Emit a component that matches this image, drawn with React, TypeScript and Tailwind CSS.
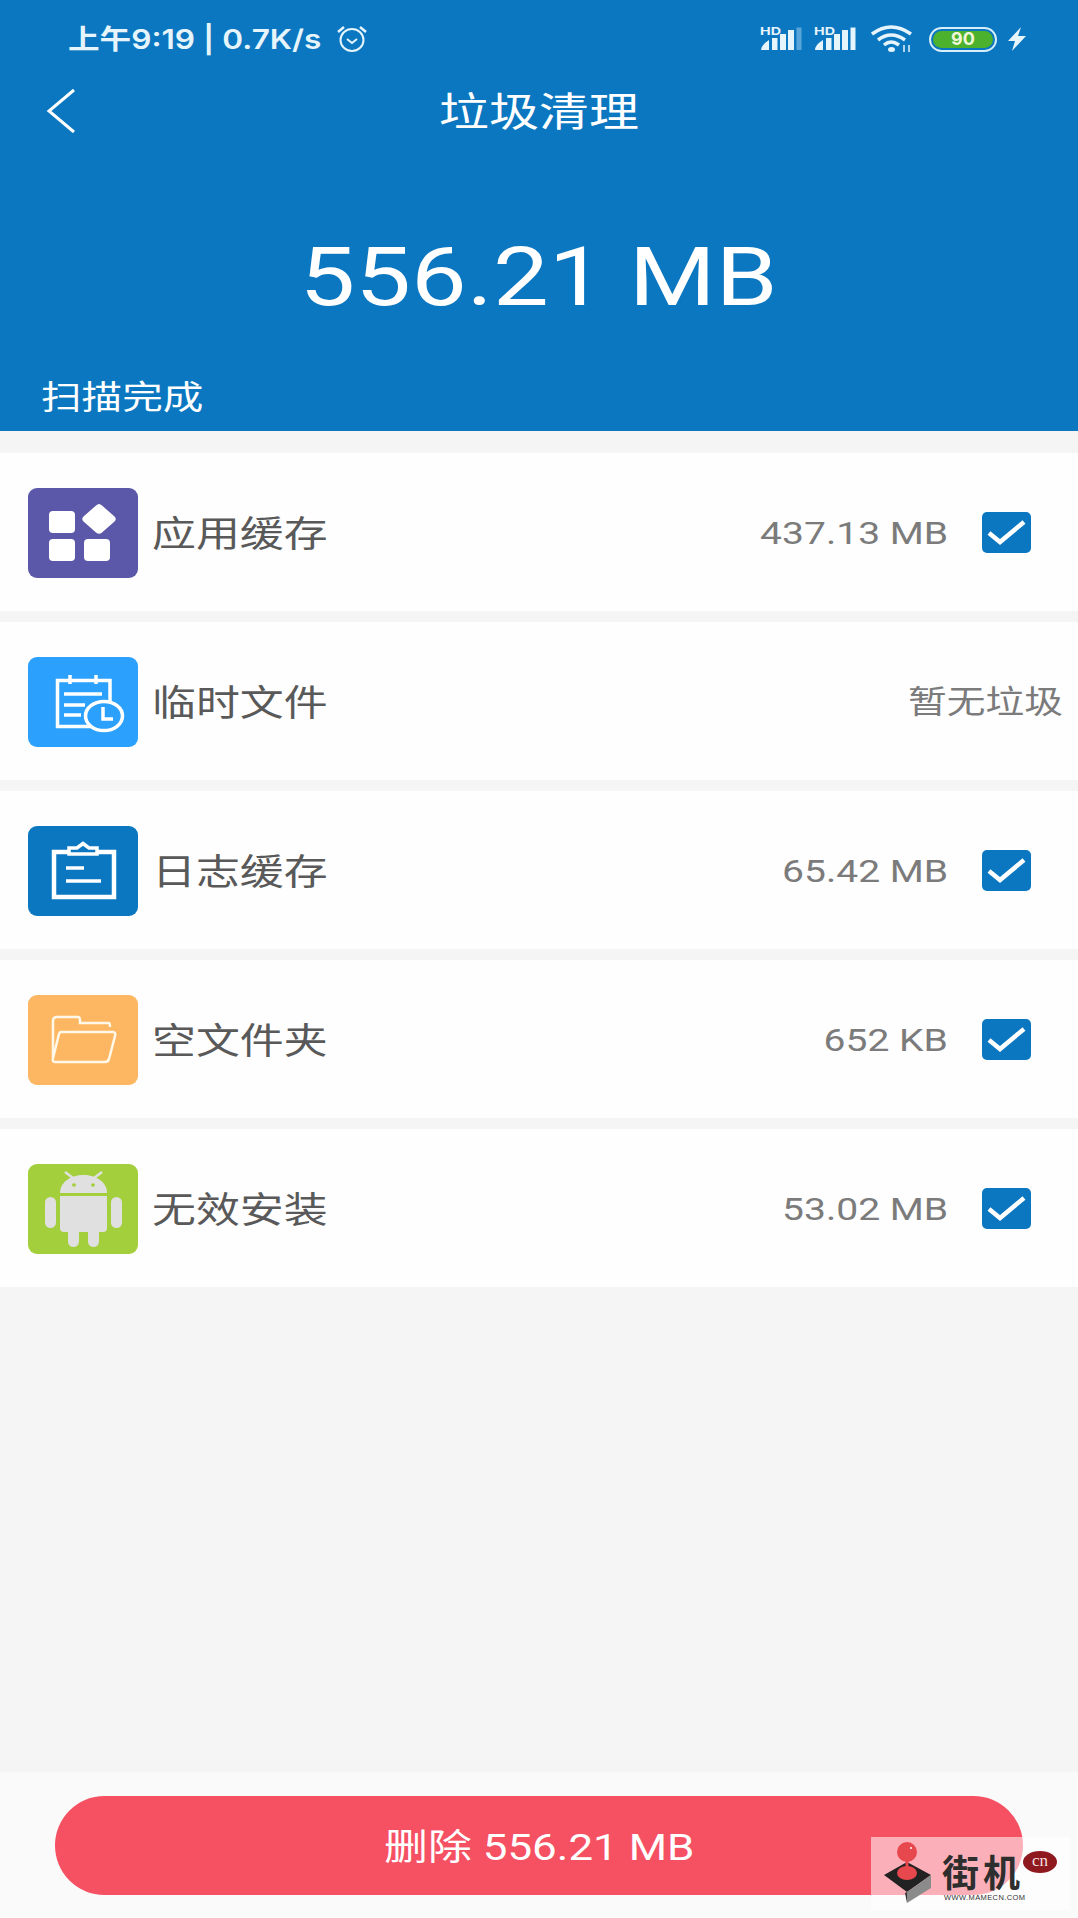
import React from "react";

const cjk = "font-['Roboto','Noto_Sans_CJK_SC',sans-serif]";

function Check() {
  return (
    <svg width="49" height="41" viewBox="0 0 49 41" className="-mt-[2px] shrink-0">
      <rect width="49" height="41" rx="5" fill="#0a77c0" />
      <path d="M7 21L18 30L42 10" fill="none" stroke="#fff" strokeWidth="4.5" />
    </svg>
  );
}

function IconBox({ bg, children }: { bg: string; children: React.ReactNode }) {
  return (
    <svg width="110" height="90" viewBox="0 0 110 90" className="shrink-0">
      <rect width="110" height="90" rx="9" fill={bg} />
      {children}
    </svg>
  );
}

const IconApps = () => (
  <IconBox bg="#5b57a9">
    <rect x="21" y="23" width="26" height="22" rx="4" fill="#fff" />
    <rect x="21" y="51" width="26" height="22" rx="4" fill="#fff" />
    <rect x="56" y="51" width="26" height="22" rx="4" fill="#fff" />
    <path d="M71 16Q72.500 16 74 17.500L86.500 28.500Q89 31 86.500 33.500L74 44.500Q71 47 68 44.500L55.500 33.500Q53 31 55.500 28.500L68 17.500Q69.500 16 71 16Z" fill="#fff" />
  </IconBox>
);

const IconCalendar = () => (
  <IconBox bg="#2ba0fd">
    <path d="M70 69.500H29.500V23.500H82V46" fill="none" stroke="#fff" strokeWidth="3.500" />
    <path d="M42 18V27M68 18V27" stroke="#fff" strokeWidth="3.500" />
    <path d="M36 37H74M36 48H57M36 58H53" stroke="#fff" strokeWidth="3.500" />
    <ellipse cx="76" cy="59" rx="18.500" ry="14.500" fill="#2ba0fd" stroke="#fff" strokeWidth="3.500" />
    <path d="M75 50V62H85" fill="none" stroke="#fff" strokeWidth="3.500" />
  </IconBox>
);

const IconClip = () => (
  <IconBox bg="#0a77c0">
    <path d="M40 26H26V71H86V26H70" fill="none" stroke="#fff" strokeWidth="4.500" />
    <path d="M41 28V22H49L55 17.500L61 22H69V28Z" fill="none" stroke="#fff" strokeWidth="3.500" />
    <path d="M38 42H56M38 55H73" stroke="#fff" strokeWidth="3.500" />
  </IconBox>
);

const IconFolder = () => (
  <IconBox bg="#fdb763">
    <path d="M25 62V26Q25 22 29 22H50Q52 22 52 25V28H81Q82 28 82 32" fill="none" stroke="#fff8e8" strokeWidth="2.500" />
    <path d="M33 37H85Q88 37 87 41L81 64Q80 67 77 67H27Q24 67 25 63L31 39Q31.500 37 33 37Z" fill="none" stroke="#fff8e8" strokeWidth="2.500" />
  </IconBox>
);

const IconAndroid = () => (
  <IconBox bg="#a4cf3d">
    <path d="M32 29C32 18 43 11 55.500 11C68 11 79 18 79 29Z" fill="#e0e0e0" />
    <path d="M45 14L37 8M66 14L74 8" stroke="#e0e0e0" strokeWidth="2.500" />
    <ellipse cx="46" cy="21" rx="2" ry="1.800" fill="#a4cf3d" />
    <ellipse cx="65" cy="21" rx="2" ry="1.800" fill="#a4cf3d" />
    <path d="M32 32H79V64Q79 68 75 68H36Q32 68 32 64Z" fill="#e0e0e0" />
    <rect x="17" y="33" width="11" height="31" rx="5.500" fill="#e0e0e0" />
    <rect x="83" y="33" width="11" height="31" rx="5.500" fill="#e0e0e0" />
    <rect x="40" y="60" width="11" height="23" rx="5.500" fill="#e0e0e0" />
    <rect x="60" y="60" width="11" height="23" rx="5.500" fill="#e0e0e0" />
  </IconBox>
);

function Row({ icon, label, value, checked = true }: { icon: React.ReactNode; label: string; value: string; checked?: boolean }) {
  return (
    <div className={`flex h-[158px] items-center bg-[#fefefe] pt-[2px] pl-[28px] ${checked ? "pr-[47px]" : "pr-[15px]"}`}>
      {icon}
      <span className="ml-[14px] inline-block origin-left scale-x-[1.22] pt-[3px] text-[36px] leading-[50px] text-[#595959]">{label}</span>
      <span className={`ml-auto inline-block origin-right ${checked ? "mr-[34px] scale-x-[1.22]" : "scale-x-[1.21]"} text-[32px] leading-[44px] text-[#7b7b7b]`}>{value}</span>
      {checked && <Check />}
    </div>
  );
}

function Signal({ faint }: { faint?: boolean }) {
  return (
    <svg width="42" height="32" viewBox="0 -4 42 32" className="-mt-[4px] shrink-0">
      <text x="0" y="9.500" fontSize="11" fontWeight="700" fill="#e6f4fb" fontFamily="Inter, sans-serif" textLength="21" lengthAdjust="spacingAndGlyphs">HD</text>
      <path d="M1 25Q1 20 9 15V25Z" fill="#e6f4fb" />
      <rect x="12" y="13" width="5.500" height="12" fill="#e6f4fb" />
      <rect x="20" y="9" width="6" height="16" fill="#e6f4fb" />
      <rect x="28" y="5" width="6" height="20" fill="#e6f4fb" />
      <rect x="36.500" y="2.500" width="5" height="22.500" fill={faint ? "#5aa6d8" : "#e6f4fb"} />
    </svg>
  );
}

function StatusRight() {
  return (
    <div className="flex items-center">
      <Signal faint />
      <span className="w-[12px]" />
      <Signal />
      <svg width="44" height="28" viewBox="0 0 44 28" className="ml-[15px] shrink-0">
        <path d="M1 9Q20 -5 40 9" fill="none" stroke="#e6f4fb" strokeWidth="3.500" />
        <path d="M7 15Q20 5 34 15" fill="none" stroke="#e6f4fb" strokeWidth="3.500" />
        <path d="M13 20Q20 14 28 20" fill="none" stroke="#e6f4fb" strokeWidth="3.500" />
        <ellipse cx="20.500" cy="24.500" rx="3.500" ry="2.500" fill="#e6f4fb" />
        <path d="M33 20V27M38 20V27" stroke="#e6f4fb" strokeWidth="1.500" />
      </svg>
      <div className="ml-[14px] flex h-[25px] w-[68px] items-center justify-center rounded-full border-[2px] border-[#d6eef8] p-[2px]">
        <div className="flex h-full w-full items-center justify-center rounded-full bg-[#4cb22e] font-['Inter',sans-serif] text-[18px] leading-none font-bold text-[#f0f6d8]">90</div>
      </div>
      <svg width="20" height="24" viewBox="0 0 20 24" className="ml-[10px] shrink-0">
        <path d="M14 0L1 14H8L5 24L19 9H11Z" fill="#e6f4fb" />
      </svg>
    </div>
  );
}

function Watermark() {
  return (
    <div className="absolute top-[1837px] left-[871px] h-[73px] w-[199px] bg-white/55">
      <svg width="70" height="73" viewBox="0 0 70 73" className="absolute top-0 left-0">
        <path d="M13 38L36 25L60 38L36 55Z" fill="#222" />
        <path d="M36 55L60 38V51L36 66Z" fill="#8b8b8b" />
        <path d="M36 55V66L34 56Z" fill="#333" />
        <ellipse cx="36" cy="36" rx="10" ry="7" fill="#e6484d" />
        <rect x="34.500" y="20" width="3" height="14" fill="#e6484d" />
        <circle cx="36" cy="15" r="10" fill="#e6484d" />
        <circle cx="40" cy="11" r="1" fill="#fff" />
      </svg>
      <span className="absolute top-[15px] left-[71px] text-[37px] leading-[39px] font-bold tracking-[4px] whitespace-nowrap text-[#2e2e2e] font-['Noto_Sans_CJK_SC',sans-serif]">街机</span>
      <span className="absolute top-[56px] left-[73px] text-[7.500px] leading-[10px] tracking-[0.400px] whitespace-nowrap text-[#333] font-['Liberation_Sans',sans-serif]">WWW.MAMECN.COM</span>
      <div className="absolute top-[14px] left-[152px] flex h-[22px] w-[34px] items-center justify-center rounded-[50%] bg-[#8e1a20] pb-[3px] text-[17px] leading-none text-[#f3dede] font-['Liberation_Serif',serif]">cn</div>
    </div>
  );
}

export default function App() {
  return (
    <div className={`relative flex h-[1918px] w-[1078px] flex-col overflow-hidden bg-[#f5f5f5] ${cjk}`}>
      <header className="flex h-[431px] flex-col bg-[#0a77c0] text-white">
        <div className="flex h-[78px] items-center justify-between pr-[51px] pl-[68px]">
          <div className="flex items-center">
            <span className="inline-block w-[222px] origin-left scale-x-[1.17] pt-[2px] font-['Inter','Noto_Sans_CJK_SC',sans-serif] text-[27px] leading-[34px] font-semibold whitespace-nowrap text-[#e6f4fb]">上午9:19 | 0.7K/s</span>
            <svg width="32" height="28" viewBox="0 0 32 28" className="ml-[46px] shrink-0">
              <ellipse cx="16" cy="15" rx="11.500" ry="11" fill="none" stroke="#e6f4fb" strokeWidth="2" />
              <path d="M11 14L16 18L21 14" fill="none" stroke="#e6f4fb" strokeWidth="2" />
              <path d="M2 7L8 2M30 7L24 2" stroke="#e6f4fb" strokeWidth="2.500" />
            </svg>
          </div>
          <StatusRight />
        </div>
        <div className="relative flex h-[66px] items-center justify-center">
          <svg width="31" height="46" viewBox="0 0 31 46" className="absolute top-[10px] left-[46px]">
            <path d="M28 2L3 23L28 44" fill="none" stroke="#fff" strokeWidth="3" />
          </svg>
          <span className="inline-block scale-x-[1.25] pt-[4px] text-[40px] leading-[56px]">垃圾清理</span>
        </div>
        <div className="mt-[56px] flex h-[150px] items-center justify-center">
          <span className="inline-block scale-x-[1.21] pt-[4px] text-[82px] leading-[100px] whitespace-nowrap">556.21 MB</span>
        </div>
        <div className="mt-[28px] flex h-[40px] items-center pl-[41px]">
          <span className="inline-block origin-left scale-x-[1.23] text-[33px] leading-[40px]">扫描完成</span>
        </div>
      </header>

      <main className="mt-[22px] flex flex-col gap-[11px]">
        <Row icon={<IconApps />} label="应用缓存" value="437.13 MB" />
        <Row icon={<IconCalendar />} label="临时文件" value="暂无垃圾" checked={false} />
        <Row icon={<IconClip />} label="日志缓存" value="65.42 MB" />
        <Row icon={<IconFolder />} label="空文件夹" value="652 KB" />
        <Row icon={<IconAndroid />} label="无效安装" value="53.02 MB" />
      </main>

      <footer className="mt-auto h-[146px] bg-[#fafafa] px-[55px] pt-[24px]">
        <button className="flex h-[99px] w-full items-center justify-center rounded-full bg-[#f65063] text-white">
          <span className="inline-block scale-x-[1.22] pt-[4px] text-[36px] leading-[50px] whitespace-nowrap">删除 556.21 MB</span>
        </button>
      </footer>
      <Watermark />
    </div>
  );
}
